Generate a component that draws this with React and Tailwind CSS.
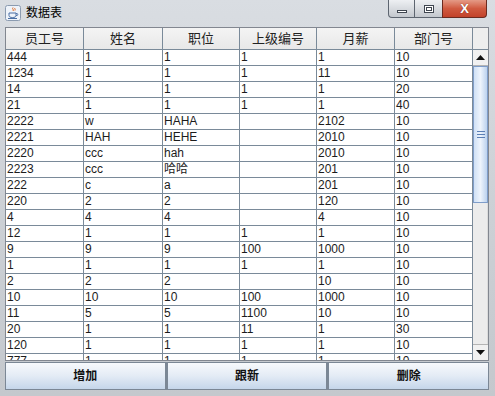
const columns = [
  { title: "员工号", width: "w-[78px]" },
  { title: "姓名", width: "w-[79px]" },
  { title: "职位", width: "w-[77px]" },
  { title: "上级编号", width: "w-[77px]" },
  { title: "月薪", width: "w-[78px]" },
  { title: "部门号", width: "w-[78px]" }
];

const rows = [
  ["444", "1", "1", "1", "1", "10"],
  ["1234", "1", "1", "1", "11", "10"],
  ["14", "2", "1", "1", "1", "20"],
  ["21", "1", "1", "1", "1", "40"],
  ["2222", "w", "HAHA", "", "2102", "10"],
  ["2221", "HAH", "HEHE", "", "2010", "10"],
  ["2220", "ccc", "hah", "", "2010", "10"],
  ["2223", "ccc", "哈哈", "", "201", "10"],
  ["222", "c", "a", "", "201", "10"],
  ["220", "2", "2", "", "120", "10"],
  ["4", "4", "4", "", "4", "10"],
  ["12", "1", "1", "1", "1", "10"],
  ["9", "9", "9", "100", "1000", "10"],
  ["1", "1", "1", "1", "1", "10"],
  ["2", "2", "2", "", "10", "10"],
  ["10", "10", "10", "100", "1000", "10"],
  ["11", "5", "5", "1100", "10", "10"],
  ["20", "1", "1", "11", "1", "30"],
  ["120", "1", "1", "1", "1", "10"],
  ["777", "1", "1", "1", "1", "10"]
];

const font = "font-['Liberation_Sans','Noto_Sans_CJK_SC',sans-serif]";

const JavaIcon = () => (
  <svg width="16" height="16" viewBox="0 0 16 16">
    <rect x="0.5" y="0.5" width="15" height="15" rx="2" fill="#eef3fa" stroke="#8b9bb0" />
    <path d="M8 2.5c-1.5 1.5 1.5 2 0 3.5M10 3c-1 1 1 1.5 0 2.5" stroke="#e2691e" strokeWidth="1" fill="none" />
    <path d="M4 8h7v2.5c0 1.5-1.5 2-3.5 2S4 12 4 10.5z" fill="none" stroke="#4a6fa5" strokeWidth="1" />
    <path d="M11 8.5h1.2c.8 0 .8 2 0 2H11" fill="none" stroke="#4a6fa5" strokeWidth="0.9" />
    <path d="M3 13.5h9" stroke="#4a6fa5" strokeWidth="1" />
  </svg>
);

const Arrow = ({ up }) => (
  <svg width="9" height="5" viewBox="0 0 9 5">
    <path d={up ? "M0 5L4.5 0L9 5z" : "M0 0L4.5 5L9 0z"} fill="#111" />
  </svg>
);

export default function App() {
  return (
    <div className={`relative flex h-[396px] w-[495px] flex-col overflow-hidden bg-gradient-to-b from-[#d9dde2] via-[#cdd1d6] to-[#c4c8cd] ${font}`}>
      {/* title bar */}
      <div className="flex h-[27px] items-start">
        <div className="ml-[5px] mt-[5px]">
          <JavaIcon />
        </div>
        <span className="ml-[5px] mt-[5px] text-[12px] leading-[16px] text-black">数据表</span>
        <div className="ml-auto mr-[8px] flex h-[18px]">
          <div className="flex w-[27px] items-center justify-center rounded-bl-[4px] border border-t-0 border-[#5d6570] bg-gradient-to-b from-[#eef0f3] to-[#c3c8ce]">
            <div className="mt-[5px] h-[3px] w-[10px] border border-[#3f4650] bg-white" />
          </div>
          <div className="flex w-[27px] items-center justify-center border-b border-[#5d6570] bg-gradient-to-b from-[#eef0f3] to-[#c3c8ce]">
            <div className="h-[8px] w-[10px] border border-[#3f4650] bg-white">
              <div className="m-[1px] h-[4px] w-[6px] border border-[#3f4650]" />
            </div>
          </div>
          <div className="flex w-[45px] items-center justify-center rounded-br-[4px] border border-t-0 border-[#6b2a1f] bg-gradient-to-b from-[#e49a86] via-[#d05a40] to-[#c2422a]">
            <span className="text-[13px] font-bold leading-none text-white [text-shadow:0_0_1px_#5a1a10]">X</span>
          </div>
        </div>
      </div>

      {/* scroll pane */}
      <div className="mx-[5px] flex h-[334px] w-[484px] flex-col border border-[#828790] bg-white">
        <div className="flex h-[22px] border-b border-[#7a8a99] bg-gradient-to-b from-[#f4f4f4] to-[#e8e8e8]">
          {columns.map((col) => (
            <div
              key={col.title}
              className={`${col.width} flex items-center justify-center border-r border-[#7a8a99] text-[13px] text-[#222]`}
            >
              {col.title}
            </div>
          ))}
          <div className="flex-1 bg-[#eeeeee]" />
        </div>
        <div className="flex min-h-0 flex-1">
          <div className="w-[467px] overflow-hidden">
            {rows.map((row, i) => (
              <div key={i} className="flex h-[16px] border-b border-[#7a8a99]">
                {row.map((cell, j) => (
                  <div
                    key={j}
                    className={`${columns[j].width} border-r border-[#7a8a99] pl-[1px] text-[12px] leading-[15px] text-[#1c1c1c]`}
                  >
                    {cell}
                  </div>
                ))}
              </div>
            ))}
          </div>
          <div className="flex w-[15px] flex-col bg-[#ececec]">
            <div className="flex h-[16px] items-center justify-center border-b border-[#b4b4b4] bg-[#f1f1f1]">
              <Arrow up />
            </div>
            <div className="flex h-[137px] items-center justify-center border border-[#7f9dc9] bg-gradient-to-r from-[#cfe0f5] via-[#eef4fc] to-[#bcd2ee]">
              <div className="flex flex-col gap-[2px]">
                <div className="h-px w-[8px] bg-[#5b7fb5]" />
                <div className="h-px w-[8px] bg-[#5b7fb5]" />
                <div className="h-px w-[8px] bg-[#5b7fb5]" />
              </div>
            </div>
            <div className="flex-1 border-r border-[#dcdcdc]" />
            <div className="flex h-[16px] items-center justify-center border-t border-[#b4b4b4] bg-[#f1f1f1]">
              <Arrow />
            </div>
          </div>
        </div>
      </div>

      {/* buttons */}
      <div className="mx-[5px] mt-px flex h-[28px] w-[484px]">
        {["增加", "跟新", "删除"].map((label, i) => (
          <div
            key={label}
            className={`flex flex-1 items-center justify-center border border-[#7b8795] bg-gradient-to-b from-[#f7f9fc] via-[#e3ebf5] to-[#c5d6ea] text-[12px] font-bold text-[#111] ${i > 0 ? "border-l-[2px]" : ""}`}
          >
            {label}
          </div>
        ))}
      </div>
    </div>
  );
}
